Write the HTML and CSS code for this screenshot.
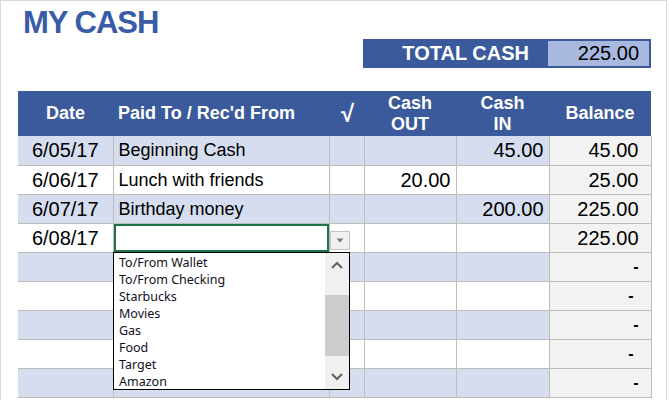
FILE: index.html
```html
<!DOCTYPE html>
<html lang="en">

<head>
    <meta charset="UTF-8">
    <title>My Cash</title>
    <link rel="stylesheet" href="styles.css">
</head>

<body>
    <div class="sheet">
        <h1 class="title">MY CASH</h1>

        <div class="content">
            <!-- Total -->
            <div class="total-bar">
                <div class="total-label">TOTAL CASH</div>
                <div class="total-value">225.00</div>
            </div>

            <!-- Register -->
            <table class="register">
                <colgroup>
                    <col class="c-date">
                    <col class="c-paid">
                    <col class="c-check">
                    <col class="c-out">
                    <col class="c-in">
                    <col class="c-bal">
                </colgroup>
                <thead>
                    <tr>
                        <th>Date</th>
                        <th class="left">Paid To / Rec'd From</th>
                        <th class="check">√</th>
                        <th>Cash<br>OUT</th>
                        <th>Cash<br>IN</th>
                        <th>Balance</th>
                    </tr>
                </thead>
                <tbody>
                    <tr class="shade">
                        <td class="date">6/05/17</td>
                        <td class="desc">Beginning Cash</td>
                        <td></td>
                        <td class="num"></td>
                        <td class="num">45.00</td>
                        <td class="bal">45.00</td>
                    </tr>
                    <tr>
                        <td class="date">6/06/17</td>
                        <td class="desc">Lunch with friends</td>
                        <td></td>
                        <td class="num">20.00</td>
                        <td class="num"></td>
                        <td class="bal">25.00</td>
                    </tr>
                    <tr class="shade">
                        <td class="date">6/07/17</td>
                        <td class="desc">Birthday money</td>
                        <td></td>
                        <td class="num"></td>
                        <td class="num">200.00</td>
                        <td class="bal">225.00</td>
                    </tr>
                    <tr>
                        <td class="date">6/08/17</td>
                        <td class="desc selected"></td>
                        <td></td>
                        <td class="num"></td>
                        <td class="num"></td>
                        <td class="bal">225.00</td>
                    </tr>
                    <tr class="shade">
                        <td></td><td></td><td></td><td></td><td></td>
                        <td class="bal dash">-</td>
                    </tr>
                    <tr>
                        <td></td><td></td><td></td><td></td><td></td>
                        <td class="bal dash">-</td>
                    </tr>
                    <tr class="shade">
                        <td></td><td></td><td></td><td></td><td></td>
                        <td class="bal dash">-</td>
                    </tr>
                    <tr>
                        <td></td><td></td><td></td><td></td><td></td>
                        <td class="bal dash">-</td>
                    </tr>
                    <tr class="shade">
                        <td></td><td></td><td></td><td></td><td></td>
                        <td class="bal dash">-</td>
                    </tr>
                </tbody>
            </table>
        </div>

        <!-- Dropdown button of the selected cell -->
        <div class="drop-btn">
            <svg width="8" height="5" viewBox="0 0 8 5"><path d="M0.5 0.5 L7.5 0.5 L4 4.5 Z" fill="#777"/></svg>
        </div>

        <!-- Validation list -->
        <div class="drop-list">
            <ul class="drop-items">
                <li>To/From Wallet</li>
                <li>To/From Checking</li>
                <li>Starbucks</li>
                <li>Movies</li>
                <li>Gas</li>
                <li>Food</li>
                <li>Target</li>
                <li>Amazon</li>
            </ul>
            <div class="scrollbar">
                <svg class="arrow" width="12" height="8" viewBox="0 0 12 8"><path d="M1 7 L6 2 L11 7" fill="none" stroke="#606060" stroke-width="2"/></svg>
                <div class="track">
                    <div class="thumb"></div>
                </div>
                <svg class="arrow" width="12" height="8" viewBox="0 0 12 8"><path d="M1 1 L6 6 L11 1" fill="none" stroke="#606060" stroke-width="2"/></svg>
            </div>
        </div>
    </div>
</body>

</html>
```

FILE: styles.css
```css
body {
    margin: 0;
    padding: 0;
    background-color: #fff;
    font-family: "Liberation Sans", Arial, sans-serif;
}

.sheet {
    position: relative;
    width: 665px;
    height: 399px;
    border: 1px solid #d9d9d9;
    border-bottom: none;
    overflow: hidden;
}

.title {
    margin: 5px 0 0 22px;
    height: 33px;
    font-size: 31px;
    line-height: 34px;
    letter-spacing: -1px;
    font-weight: bold;
    color: #3a5ca6;
}

.content {
    width: 633px;
    margin-left: 17px;
}

.total-bar {
    display: flex;
    width: 288px;
    height: 29px;
    margin-left: auto;
    box-sizing: border-box;
    padding: 2px 2px 2px 0;
    background-color: #3b5a9b;
}

.total-label {
    flex: 1;
    text-align: right;
    padding-right: 19px;
    color: #fff;
    font-size: 20px;
    font-weight: bold;
    line-height: 25px;
}

.total-value {
    width: 101px;
    box-sizing: border-box;
    padding-right: 10px;
    text-align: right;
    background-color: #a9b8df;
    font-size: 20px;
    line-height: 25px;
    color: #000;
}

.register {
    margin-top: 23px;
    width: 633px;
    table-layout: fixed;
    border-collapse: collapse;
    border-spacing: 0;
}

.c-date { width: 95px; }
.c-paid { width: 216px; }
.c-check { width: 35px; }
.c-out { width: 92px; }
.c-in { width: 93px; }
.c-bal { width: 102px; }

.register thead tr {
    height: 45px;
}

.register th {
    padding: 0;
    background-color: #3b5a9b;
    color: #fff;
    font-size: 18px;
    line-height: 21px;
    font-weight: bold;
    text-align: center;
}

.register th.left {
    text-align: left;
    padding-left: 5px;
}

.register th.check {
    font-size: 24px;
    padding-left: 2px;
}

.register tbody tr {
    height: 29px;
}

.register td {
    padding: 0;
    border: 1px solid #bcbcbc;
    border-top: none;
    font-size: 20px;
    line-height: 26px;
    color: #000;
    white-space: nowrap;
}

.register td:first-child {
    border-left: none;
}

.register tr.shade td {
    background-color: #d5ddef;
}

.register td.date {
    text-align: center;
}

.register td.desc {
    font-size: 18px;
    padding-left: 5px;
}

.register td.num {
    text-align: right;
    padding-right: 5px;
}

.register td.bal,
.register tr.shade td.bal {
    text-align: right;
    padding-right: 12px;
    background-color: #f2f2f2;
}

.register td.dash {
    padding-right: 17px;
    font-weight: bold;
    font-size: 16px;
}

.register td.selected {
    box-shadow: inset 0 0 0 2px #217346;
}

.drop-btn {
    position: absolute;
    left: 329px;
    top: 230px;
    width: 20px;
    height: 19px;
    box-sizing: border-box;
    border: 1px solid #c4c4c4;
    background-color: #f0f0f0;
    display: flex;
    align-items: center;
    justify-content: center;
}

.drop-list {
    position: absolute;
    left: 112px;
    top: 251px;
    width: 237px;
    height: 138px;
    box-sizing: border-box;
    border: 1px solid #000;
    background-color: #fff;
    display: flex;
}

.drop-items {
    flex: 1;
    margin: 0;
    padding: 1px 0 0 5px;
    list-style: none;
    font-family: "Noto Sans", "Open Sans", sans-serif;
    font-size: 12.5px;
    line-height: 17px;
    color: #10101c;
}

.scrollbar {
    width: 24px;
    display: flex;
    flex-direction: column;
    align-items: center;
    background-color: #f0f0f0;
}

.scrollbar .arrow {
    flex: none;
    margin: 8px 0;
}

.track {
    flex: 1;
    width: 100%;
    padding-top: 18px;
}

.thumb {
    height: 61px;
    background-color: #cdcdcd;
}
```
